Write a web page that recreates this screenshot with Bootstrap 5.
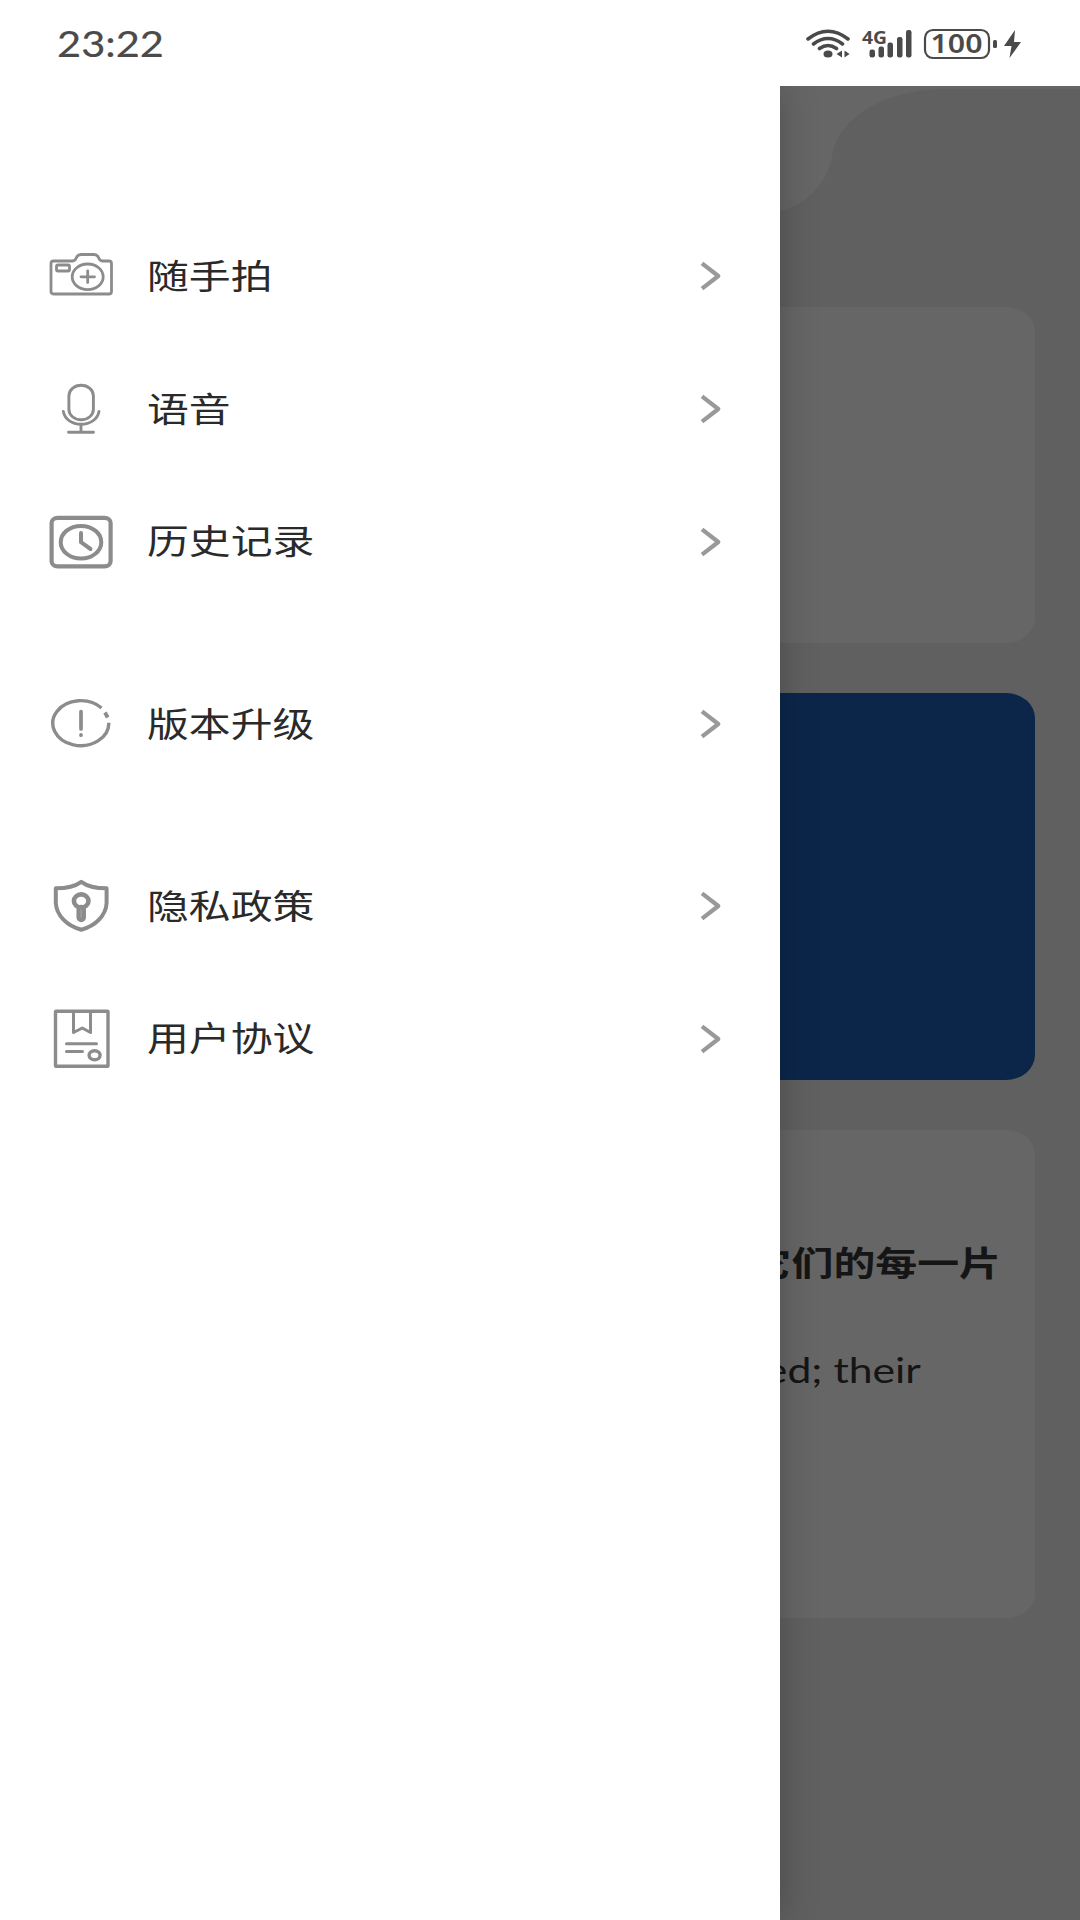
<!DOCTYPE html>
<html lang="zh-CN">
<head>
<meta charset="utf-8">
<meta name="viewport" content="width=device-width, initial-scale=1">
<title>菜单</title>
<link rel="stylesheet" href="https://cdn.jsdelivr.net/npm/bootstrap@5.3.0/dist/css/bootstrap.min.css">
<style>
  body { width: 1080px; height: 1920px; overflow: hidden; font-family: Lato, "Noto Sans CJK SC", sans-serif; background: #fff; }
  .status { height: 86px; padding: 2px 50px 0 57px; color: #4a4a4a; }
  .clock { font-size: 36.5px; line-height: 1; margin-top: -2px; -webkit-text-stroke: .2px #4a4a4a; transform: scaleX(1.14); transform-origin: left center; }
  .home { height: 1834px; background: #f1f1f1; }
  .wave { height: 221px; }
  .feed { gap: 50px; padding: 0 45px; }
  .panel { border-radius: 29px / 25px; background: #fff; }
  .panel-a { height: 336px; }
  .panel-b { height: 387px; background: #1e60ba; }
  .panel-c { height: 488px; padding: 108px 34px 0 0; color: #363636; }
  .quote { font-size: 34px; line-height: 50px; white-space: nowrap; transform: scaleX(1.232); transform-origin: right center; }
  .quote-en { margin: 56px 80px 0 0; font-size: 35px; transform: scaleX(1.22); }
  .scrim { background: rgba(0,0,0,.6); }
  .drawer { width: 780px; padding: 124px 56px 0 48px; box-shadow: 0 0 36px rgba(0,0,0,.24); clip-path: inset(0 -50px 0 0); }
  .entry { height: 132.8px; }
  .entry-gap { margin-top: 49.3px; }
  .entry svg { fill: none; stroke: #8c8c8c; stroke-linecap: round; stroke-linejoin: round; flex: none; }
  .entry svg.chevron { stroke: #999; stroke-width: 4.2; stroke-linecap: butt; }
  .caption { margin: -3px 0 0 33px; font: 34px/50px "Noto Sans CJK SC", sans-serif; color: #2a2a2a; transform: scaleX(1.23); transform-origin: left center; }
</style>
</head>
<body>
<header class="status d-flex align-items-center justify-content-between">
  <div class="clock">23:22</div>
  <svg width="230" height="40" viewBox="800 24 230 40" fill="#4a4a4a" aria-label="状态">
    <g fill="none" stroke="#4a4a4a" stroke-width="3.6" stroke-linecap="round">
      <path d="M808 39Q828 23.500 848 39M813.500 44Q828 33 842.500 44M819.500 48.500Q828 42.500 836.500 48.500"/>
    </g>
    <ellipse cx="828" cy="54" rx="4.500" ry="3.500"/>
    <path d="M842 50.500v7l-5.500-3.500zM844.500 50.500v7l5-3.500z"/>
    <text x="862" y="43.500" font-family="Noto Sans" font-weight="700" font-size="18.500" textLength="25" lengthAdjust="spacingAndGlyphs">4G</text>
    <rect x="869.500" y="49.500" width="5.500" height="8" rx="2.200"/>
    <rect x="878.500" y="46.500" width="5.500" height="11" rx="2.200"/>
    <rect x="887.500" y="42.500" width="5.500" height="15" rx="2.200"/>
    <rect x="897" y="37" width="5.500" height="20.500" rx="2.200"/>
    <rect x="906" y="30" width="5.500" height="27.500" rx="2.200"/>
    <rect x="925" y="30" width="64" height="28" rx="8" fill="none" stroke="#4a4a4a" stroke-width="2.200"/>
    <text x="930.500" y="53.300" font-family="Noto Sans" font-weight="600" font-size="27" textLength="52" lengthAdjust="spacingAndGlyphs">100</text>
    <rect x="993" y="40" width="4" height="8" rx="1.500"/>
    <path d="M1015 30l-11 16h7.500l-2 12 11.500-16h-7z"/>
  </svg>
</header>

<main class="home position-relative">
  <svg class="wave d-block" width="1080" height="221" viewBox="0 86 1080 221">
    <path fill="#fff" d="M0 86H1080V89H940C880 91 836 121 832 157C826 184 806 205 780 211H0z"/>
  </svg>
  <div class="feed d-flex flex-column">
    <section class="panel panel-a"></section>
    <section class="panel panel-b"></section>
    <section class="panel panel-c d-flex flex-column align-items-end">
      <div class="quote fw-bold">它们的每一片</div>
      <div class="quote quote-en">ed; their</div>
    </section>
  </div>
  <div class="scrim position-absolute top-0 start-0 w-100 h-100"></div>
  <aside class="drawer position-absolute top-0 start-0 h-100 bg-white">
    <nav class="d-flex flex-column">
      <div class="entry d-flex align-items-center">
        <svg width="66" height="66" stroke-width="2.800"><path d="M5.500 18H24Q27 18 28 15.500Q29.500 11.500 33 11.500H46Q49.500 11.500 51 15.500Q52 18 55 18H61Q63.500 18 63.500 20.500V48.500Q63.500 51 61 51H5.500Q3 51 3 48.500V20.500Q3 18 5.500 18z"/><rect x="8.500" y="22" width="13" height="6" rx="1.500"/><ellipse cx="39.700" cy="33.800" rx="15.500" ry="12.800"/><path d="M33 33.800H46.500M39.700 28V39.500"/></svg>
        <span class="caption">随手拍</span><svg class="chevron ms-auto" width="28" height="32"><path d="M6 3.300L22.300 16L6 28.700"/></svg>
      </div>
      <div class="entry d-flex align-items-center">
        <svg width="66" height="66" stroke-width="2.900"><rect x="20.900" y="9.300" width="24.500" height="34.500" rx="12.200" ry="10.500"/><path d="M15.300 35.500C17 43.500 24 48.300 33 48.300S49.500 43.500 51 35.500M33 48.500V56M20.500 56.300H45.500"/></svg>
        <span class="caption">语音</span><svg class="chevron ms-auto" width="28" height="32"><path d="M6 3.300L22.300 16L6 28.700"/></svg>
      </div>
      <div class="entry d-flex align-items-center">
        <svg width="66" height="66" stroke-width="4.200"><rect x="3.600" y="8.800" width="59" height="48.500" rx="6" ry="5"/><ellipse cx="33" cy="33.200" rx="20.300" ry="16.300" stroke-width="4"/><path d="M33 24V33.200L42.500 40" stroke-width="4"/></svg>
        <span class="caption">历史记录</span><svg class="chevron ms-auto" width="28" height="32"><path d="M6 3.300L22.300 16L6 28.700"/></svg>
      </div>
      <div class="entry entry-gap d-flex align-items-center">
        <svg width="66" height="66" stroke-width="3.400"><path d="M53.500 17A28 22.500 0 1 0 60.800 31.800" stroke-linecap="butt"/><path d="M57 21.500L59.700 26.500" stroke-linecap="butt" stroke-width="3.800"/><path d="M33 20.500V38M33 43.900V44.200" stroke-width="3.700"/></svg>
        <span class="caption">版本升级</span><svg class="chevron ms-auto" width="28" height="32"><path d="M6 3.300L22.300 16L6 28.700"/></svg>
      </div>
      <div class="entry entry-gap d-flex align-items-center">
        <svg width="66" height="66" stroke-width="4"><path d="M33.300 8.800C27 13.500 17 15.300 7.800 15.300V30C8.500 42.500 19 53 33.300 56.700C47.500 53 58 42.500 58.600 30V15.300C49 15.300 39.500 13.500 33.300 8.800z"/><ellipse cx="33.200" cy="28" rx="7.300" ry="6.600" stroke-width="4.600"/><path d="M33.200 36.500V44.500" stroke-width="9.500"/><path d="M33.200 37V44" stroke="#a0a0a0" stroke-width="1.500"/></svg>
        <span class="caption">隐私政策</span><svg class="chevron ms-auto" width="28" height="32"><path d="M6 3.300L22.300 16L6 28.700"/></svg>
      </div>
      <div class="entry d-flex align-items-center">
        <svg width="66" height="66" stroke-width="3.400"><rect x="7.500" y="5.200" width="52.500" height="55" rx=".5"/><path d="M25.500 5.500V26.500L34.300 22L42.500 26.500V5.500" stroke-width="3"/><path d="M18.500 37.700H48.500M18.500 45.600H34.500" stroke-width="3"/><ellipse cx="46.600" cy="49.300" rx="5.500" ry="4.500"/></svg>
        <span class="caption">用户协议</span><svg class="chevron ms-auto" width="28" height="32"><path d="M6 3.300L22.300 16L6 28.700"/></svg>
      </div>
    </nav>
  </aside>
</main>
<script src="https://cdn.jsdelivr.net/npm/bootstrap@5.3.0/dist/js/bootstrap.bundle.min.js"></script>
</body>
</html>
